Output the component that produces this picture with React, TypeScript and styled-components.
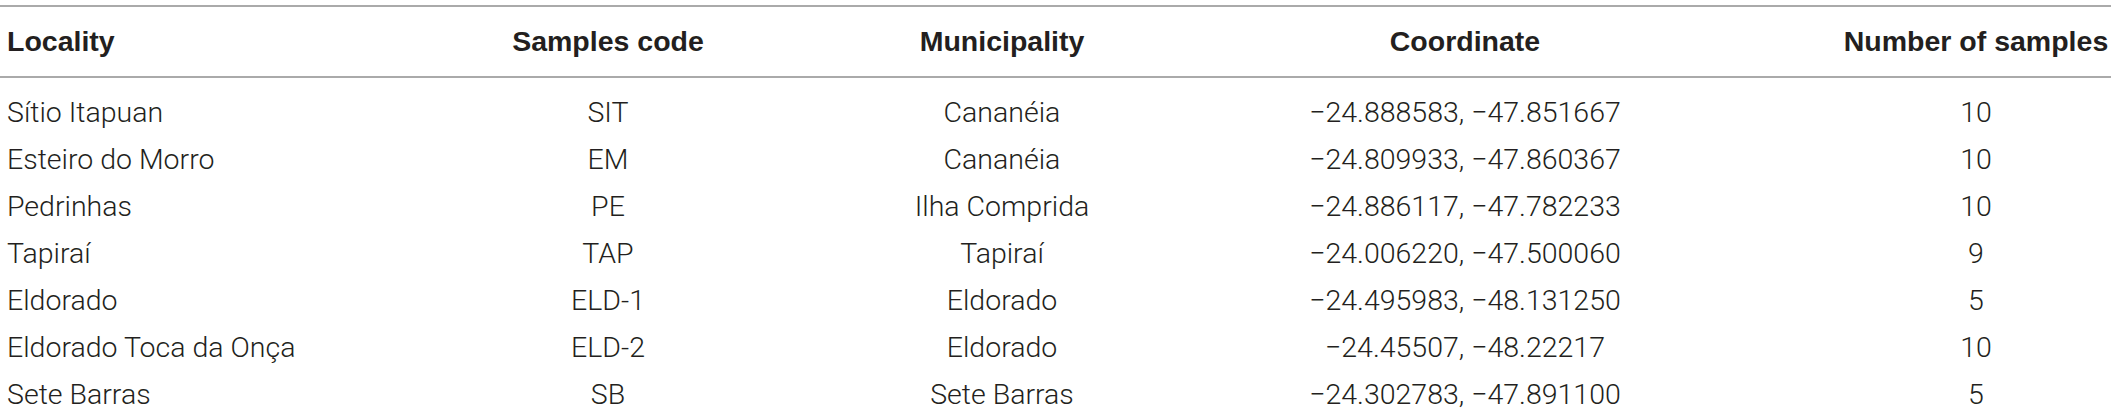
import React from 'react';
import styled, { createGlobalStyle } from 'styled-components';

const GlobalStyle = createGlobalStyle`
    body {
        margin: 0;
        background: #ffffff;
        font-family: "Liberation Sans", Arial, sans-serif;
        color: #231f20;
    }
`;

const COLUMNS = '301px 614px 174px 752px 270px';

const rows = [
    { locality: 'Sítio Itapuan', code: 'SIT', municipality: 'Cananéia', coordinate: '−24.888583, −47.851667', samples: 10 },
    { locality: 'Esteiro do Morro', code: 'EM', municipality: 'Cananéia', coordinate: '−24.809933, −47.860367', samples: 10 },
    { locality: 'Pedrinhas', code: 'PE', municipality: 'Ilha Comprida', coordinate: '−24.886117, −47.782233', samples: 10 },
    { locality: 'Tapiraí', code: 'TAP', municipality: 'Tapiraí', coordinate: '−24.006220, −47.500060', samples: 9 },
    { locality: 'Eldorado', code: 'ELD-1', municipality: 'Eldorado', coordinate: '−24.495983, −48.131250', samples: 5 },
    { locality: 'Eldorado Toca da Onça', code: 'ELD-2', municipality: 'Eldorado', coordinate: '−24.45507, −48.22217', samples: 10 },
    { locality: 'Sete Barras', code: 'SB', municipality: 'Sete Barras', coordinate: '−24.302783, −47.891100', samples: 5 },
];

const App: React.FC = () => {
    return (
        <>
            <GlobalStyle />
            <Table>
                <HeadRow>
                    <HeadCell $left>Locality</HeadCell>
                    <HeadCell>Samples code</HeadCell>
                    <HeadCell>Municipality</HeadCell>
                    <HeadCell>Coordinate</HeadCell>
                    <HeadCell>Number of samples</HeadCell>
                </HeadRow>
                <Body>
                    {rows.map((r) => (
                        <Row key={r.code}>
                            <Cell $left>{r.locality}</Cell>
                            <Cell>{r.code}</Cell>
                            <Cell>{r.municipality}</Cell>
                            <Cell>{r.coordinate}</Cell>
                            <Cell>{r.samples}</Cell>
                        </Row>
                    ))}
                </Body>
            </Table>
        </>
    );
};

export default App;

const Table = styled.div`
    width: 2111px;
    margin-top: 5px;
`;

const HeadRow = styled.div`
    display: grid;
    grid-template-columns: ${COLUMNS};
    height: 69px;
    border-top: 2px solid #aaaaaa;
    border-bottom: 2px solid #aaaaaa;
`;

const HeadCell = styled.div<{ $left?: boolean }>`
    display: flex;
    align-items: center;
    justify-content: ${({ $left }) => ($left ? 'flex-start' : 'center')};
    padding-left: ${({ $left }) => ($left ? '7px' : '0')};
    font-size: 28.5px;
    font-weight: 700;
    line-height: 69px;
    white-space: nowrap;
`;

const Body = styled.div`
    padding-top: 11px;
`;

const Row = styled.div`
    display: grid;
    grid-template-columns: ${COLUMNS};
    height: 47px;
`;

const Cell = styled.div<{ $left?: boolean }>`
    display: flex;
    align-items: center;
    justify-content: ${({ $left }) => ($left ? 'flex-start' : 'center')};
    padding-left: ${({ $left }) => ($left ? '7px' : '0')};
    font-family: Roboto, "Liberation Sans", Arial, sans-serif;
    font-size: 28.5px;
    font-weight: 300;
    line-height: 47px;
    white-space: nowrap;
`;
